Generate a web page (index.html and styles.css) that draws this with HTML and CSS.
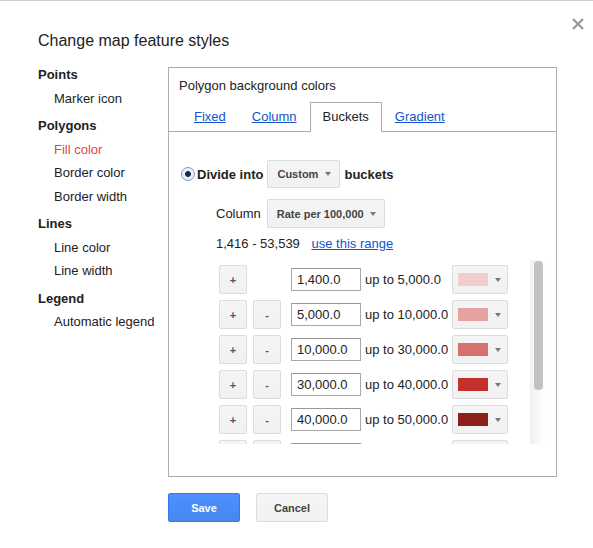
FILE: index.html
```html
<!DOCTYPE html>
<html lang="en">
<head>
  <meta charset="UTF-8" />
  <title>Change map feature styles</title>
  <link rel="stylesheet" href="styles.css">
</head>
<body>
  <div class="dialog">
    <a class="close" href="#" title="Close">
      <svg width="12" height="12" viewBox="0 0 12 12"><path d="M1 1L11 11M11 1L1 11" stroke="#9a9a9a" stroke-width="2.4"/></svg>
    </a>
    <h1>Change map feature styles</h1>

    <div class="content">
      <ul class="nav">
        <li class="group">Points</li>
        <li>Marker icon</li>
        <li class="group">Polygons</li>
        <li class="selected">Fill color</li>
        <li>Border color</li>
        <li>Border width</li>
        <li class="group">Lines</li>
        <li>Line color</li>
        <li>Line width</li>
        <li class="group">Legend</li>
        <li>Automatic legend</li>
      </ul>

      <div class="panel">
        <div class="panel-title">Polygon background colors</div>
        <div class="tabs">
          <a class="tab" href="#">Fixed</a>
          <a class="tab" href="#">Column</a>
          <span class="tab active">Buckets</span>
          <a class="tab" href="#">Gradient</a>
        </div>

        <div class="buckets">
          <div class="divide">
            <span class="radio"></span>
            <b>Divide into</b>
            <div class="menu-btn custom">Custom<span class="arrow"></span></div>
            <b>buckets</b>
          </div>
          <div class="column-row">
            <span>Column</span>
            <div class="menu-btn rate">Rate per 100,000<span class="arrow"></span></div>
          </div>
          <div class="range">1,416 - 53,539 <a href="#">use this range</a></div>

          <div class="scroll">
            <div class="rows">
              <div class="row">
                <button class="small">+</button>
                <span class="spacer"></span>
                <input type="text" value="1,400.0">
                <span class="upto">up to 5,000.0</span>
                <div class="color-btn"><span class="swatch" style="background:#f2cdcd"></span><span class="arrow"></span></div>
              </div>
              <div class="row">
                <button class="small">+</button>
                <button class="small">-</button>
                <input type="text" value="5,000.0">
                <span class="upto">up to 10,000.0</span>
                <div class="color-btn"><span class="swatch" style="background:#e6a1a0"></span><span class="arrow"></span></div>
              </div>
              <div class="row">
                <button class="small">+</button>
                <button class="small">-</button>
                <input type="text" value="10,000.0">
                <span class="upto">up to 30,000.0</span>
                <div class="color-btn"><span class="swatch" style="background:#d8716d"></span><span class="arrow"></span></div>
              </div>
              <div class="row">
                <button class="small">+</button>
                <button class="small">-</button>
                <input type="text" value="30,000.0">
                <span class="upto">up to 40,000.0</span>
                <div class="color-btn"><span class="swatch" style="background:#c4302b"></span><span class="arrow"></span></div>
              </div>
              <div class="row">
                <button class="small">+</button>
                <button class="small">-</button>
                <input type="text" value="40,000.0">
                <span class="upto">up to 50,000.0</span>
                <div class="color-btn"><span class="swatch" style="background:#8e201c"></span><span class="arrow"></span></div>
              </div>
              <!-- next row peeks in under the fold -->
              <div class="row">
                <button class="small"></button>
                <button class="small"></button>
                <span class="field"></span>
                <span class="upto"></span>
                <div class="color-btn"></div>
              </div>
            </div>
            <div class="scrollbar"><div class="thumb"></div></div>
          </div>
        </div>
      </div>
    </div>

    <div class="actions">
      <button class="btn save">Save</button>
      <button class="btn cancel">Cancel</button>
    </div>
  </div>
</body>
</html>
```

FILE: styles.css
```css
body {
  margin: 0;
  font-family: "Liberation Sans", Arial, sans-serif;
  font-size: 13px;
  color: #222;
  background: #fff;
}
.dialog {
  position: relative;
  border-top: 1px solid #cfcfcf;
  padding: 0 36px 0 38px;
  height: 547px;
}
.close {
  position: absolute;
  top: 17px;
  right: 9px;
  line-height: 0;
}
h1 {
  margin: 0;
  padding-top: 30px;
  font-size: 16px;
  font-weight: normal;
  line-height: 20px;
}

.content {
  display: flex;
  align-items: flex-start;
  margin-top: 12px;
}
.nav {
  list-style: none;
  margin: 0;
  padding: 0;
  width: 130px;
}
.nav li {
  height: 23.5px;
  line-height: 23.5px;
  padding-left: 16px;
}
.nav li.group {
  padding-left: 0;
  font-weight: bold;
  margin-top: 4px;
}
.nav li.group:first-child {
  margin-top: 0;
}
.nav li.selected {
  color: #dd4b39;
}

.panel {
  box-sizing: border-box;
  width: 389px;
  height: 410px;
  margin-top: 4px;
  border: 1px solid #acacac;
}
.panel-title {
  padding: 10px 0 0 10px;
  line-height: 16px;
}
.tabs {
  display: flex;
  align-items: flex-start;
  height: 29px;
  margin-top: 8px;
  padding-left: 12px;
  border-bottom: 1px solid #acacac;
}
.tab {
  box-sizing: border-box;
  height: 29px;
  line-height: 28px;
  padding: 0 12px;
  border: 1px solid transparent;
  border-bottom: 0;
  color: #1155cc;
  text-decoration: underline;
}
.tab.active {
  height: 30px;
  margin-bottom: -1px;
  border-color: #acacac;
  background: #fff;
  color: #222;
  text-decoration: none;
}

.buckets {
  padding-left: 12px;
}
.divide {
  display: flex;
  align-items: center;
  margin-top: 28px;
  height: 28px;
}
.radio {
  box-sizing: border-box;
  width: 14px;
  height: 14px;
  margin-right: 2px;
  border: 1px solid #7f97c4;
  border-radius: 50%;
  background: radial-gradient(circle, #1b2b4c 0 2.6px, #e9f0fb 3.2px);
}
.divide .custom {
  margin: 0 4px;
  width: 73px;
}
.menu-btn {
  box-sizing: border-box;
  display: flex;
  align-items: center;
  justify-content: space-between;
  height: 28px;
  padding: 0 8px 0 9px;
  border: 1px solid #dcdcdc;
  border-radius: 2px;
  background: linear-gradient(#f5f5f5, #f1f1f1);
  color: #444;
  font-size: 11px;
  font-weight: bold;
}
.arrow {
  width: 0;
  height: 0;
  border-left: 3.5px solid transparent;
  border-right: 3.5px solid transparent;
  border-top: 4px solid #777;
}
.column-row {
  display: flex;
  align-items: center;
  margin-top: 11px;
  padding-left: 35px;
}
.column-row .rate {
  width: 118px;
  height: 29px;
  margin-left: 6px;
}
.range {
  margin-top: 8px;
  padding-left: 35px;
  line-height: 16px;
}
.range a {
  margin-left: 8px;
  color: #1155cc;
}

.scroll {
  display: flex;
  width: 329px;
  height: 184px;
  margin: 8px 0 0 35px;
  overflow: hidden;
}
.rows {
  flex: 1;
  padding: 5px 0 0 3px;
}
.row {
  display: flex;
  align-items: center;
  height: 29px;
  margin-bottom: 6px;
}
.small, .spacer {
  box-sizing: border-box;
  width: 28px;
  height: 29px;
  margin-right: 6px;
}
.small {
  padding: 0;
  border: 1px solid #dcdcdc;
  border-radius: 2px;
  background: linear-gradient(#f5f5f5, #f1f1f1);
  color: #555;
  font-family: inherit;
  font-size: 11px;
  font-weight: bold;
}
.row input, .row .field {
  box-sizing: border-box;
  width: 70px;
  height: 23px;
  margin-left: 4px;
  padding: 0 5px;
  border: 1px solid #a8a8a8;
  border-top-color: #999;
  font-family: inherit;
  font-size: 13px;
  color: #222;
}
.upto {
  width: 87px;
  margin-left: 4px;
}
.color-btn {
  box-sizing: border-box;
  display: flex;
  align-items: center;
  width: 56px;
  height: 29px;
  padding-left: 5px;
  border: 1px solid #dcdcdc;
  border-radius: 2px;
  background: linear-gradient(#f5f5f5, #f1f1f1);
}
.swatch {
  width: 30px;
  height: 13px;
  margin-right: 7px;
}
.scrollbar {
  width: 15px;
  background: linear-gradient(to right, #f0f0f0, #fbfbfb 70%, #fff);
}
.thumb {
  width: 9px;
  height: 129px;
  margin: 1px 0 0 4px;
  border-radius: 4px;
  background: #c2c2c2;
}

.actions {
  display: flex;
  gap: 16px;
  margin-top: 16px;
  padding-left: 130px;
}
.btn {
  box-sizing: border-box;
  width: 72px;
  height: 29px;
  border-radius: 2px;
  font-family: inherit;
  font-size: 11px;
  font-weight: bold;
}
.save {
  border: 1px solid #3079ed;
  background: linear-gradient(#4d90fe, #4787ed);
  color: #fff;
}
.cancel {
  border: 1px solid #dcdcdc;
  background: linear-gradient(#f5f5f5, #f1f1f1);
  color: #444;
}
```
